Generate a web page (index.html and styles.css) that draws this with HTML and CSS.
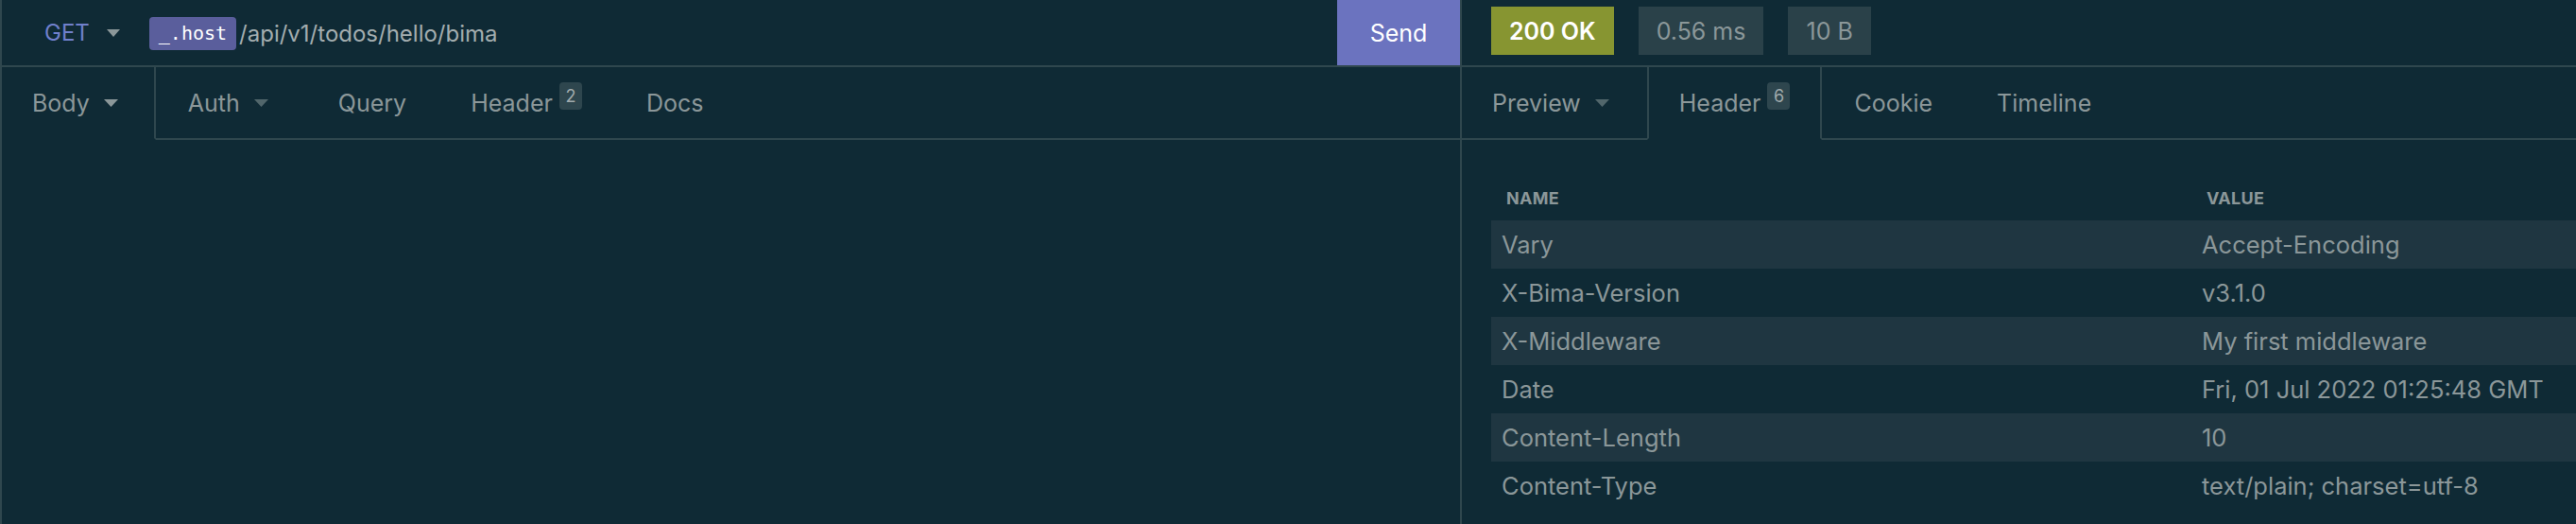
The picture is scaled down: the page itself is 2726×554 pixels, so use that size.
FILE: index.html
```html
<!DOCTYPE html>
<html lang="en">
<head>
<meta charset="utf-8">
<title>Request</title>
<link rel="stylesheet" href="styles.css">
</head>
<body>
<div class="app">
  <section class="pane pane-request">
    <header class="bar">
      <div class="method">GET
        <svg class="caret" width="14" height="8" viewBox="0 0 14 8"><polygon points="0,0 14,0 7,8"/></svg>
      </div>
      <div class="url"><span class="tag">_.host</span><span class="path">/api/v1/todos/hello/bima</span></div>
      <div class="send">Send</div>
    </header>
    <nav class="tabs">
      <div class="tab tab-active tab-first">Body
        <svg class="caret" width="15" height="8" viewBox="0 0 15 8"><polygon points="0,0 15,0 7.5,8"/></svg>
      </div>
      <div class="tab tab-drop">Auth
        <svg class="caret caret-dim" width="15" height="8" viewBox="0 0 15 8"><polygon points="0,0 15,0 7.5,8"/></svg>
      </div>
      <div class="tab">Query</div>
      <div class="tab">Header <span class="count">2</span></div>
      <div class="tab">Docs</div>
      <div class="tab-fill"></div>
    </nav>
  </section>
  <section class="pane pane-response">
    <header class="bar bar-status">
      <span class="pill pill-ok">200 OK</span>
      <span class="pill">0.56 ms</span>
      <span class="pill">10 B</span>
    </header>
    <nav class="tabs">
      <div class="tab tab-drop tab-preview">Preview
        <svg class="caret caret-dim" width="15" height="8" viewBox="0 0 15 8"><polygon points="0,0 15,0 7.5,8"/></svg>
      </div>
      <div class="tab tab-active">Header <span class="count">6</span></div>
      <div class="tab">Cookie</div>
      <div class="tab">Timeline</div>
      <div class="tab-fill"></div>
    </nav>
    <div class="headers">
      <div class="row row-head"><div class="cell">Name</div><div class="cell">Value</div></div>
      <div class="row"><div class="cell">Vary</div><div class="cell">Accept-Encoding</div></div>
      <div class="row"><div class="cell">X-Bima-Version</div><div class="cell">v3.1.0</div></div>
      <div class="row"><div class="cell">X-Middleware</div><div class="cell">My first middleware</div></div>
      <div class="row"><div class="cell">Date</div><div class="cell">Fri, 01 Jul 2022 01:25:48 GMT</div></div>
      <div class="row"><div class="cell">Content-Length</div><div class="cell">10</div></div>
      <div class="row"><div class="cell">Content-Type</div><div class="cell">text/plain; charset=utf-8</div></div>
    </div>
  </section>
</div>
</body>
</html>
```

FILE: styles.css
```css
* { box-sizing: border-box; }

html, body {
  margin: 0;
  height: 100%;
  background: #0f2a35;
}

body {
  font-family: Inter, "Noto Sans", sans-serif;
  color: #8b9799;
  overflow: hidden;
}

.app {
  display: flex;
  height: 554px;
  border-left: 2px solid #2f474e;
}

.pane {
  display: flex;
  flex-direction: column;
}

.pane-request {
  width: 1545px;
  border-right: 2px solid #2f474e;
  flex: none;
}

.pane-response {
  flex: 1;
  min-width: 0;
}

.bar {
  height: 71px;
  display: flex;
  align-items: center;
  border-bottom: 2px solid #2f474e;
  font-size: 24px;
}

.method {
  display: flex;
  align-items: center;
  gap: 18px;
  padding-left: 45px;
  color: #7080cc;
  margin-right: 31px;
}

.caret { fill: #8b9799; display: block; }
.caret-dim { fill: #51666b; }

.url {
  flex: 1;
  display: flex;
  align-items: center;
  gap: 3px;
  margin-top: 2px;
}

.tag {
  background: #5a5e9c;
  color: #ffffff;
  font-family: "DejaVu Sans Mono", monospace;
  font-size: 20px;
  height: 35px;
  line-height: 35px;
  padding: 0 10px;
  border-radius: 4px;
}

.path { color: #a3adaf; }

.send {
  align-self: stretch;
  width: 130px;
  background: #6b73bf;
  color: #ffffff;
  font-size: 25px;
  display: flex;
  align-items: center;
  justify-content: center;
}

.bar-status {
  align-items: flex-start;
  padding: 7px 0 0 31px;
  gap: 26px;
}

.pill {
  height: 51px;
  padding: 0 19px;
  display: flex;
  align-items: center;
  background: #2a4149;
  color: #8b9799;
  font-size: 25px;
}

.pill-ok {
  background: #879531;
  color: #ffffff;
  font-weight: 600;
}

.tabs {
  display: flex;
  height: 77px;
  font-size: 25px;
}

.tab {
  display: flex;
  align-items: center;
  gap: 15px;
  padding: 0 34px;
  border-bottom: 2px solid #2f474e;
}

.tab-drop { padding: 0 40px 0 34px; }

.tab-active {
  border-bottom-color: transparent;
  border-left: 2px solid #2f474e;
  border-right: 2px solid #2f474e;
  padding: 0 32px;
}

.tab-first {
  border-left: none;
  padding: 0 38px 0 32px;
}

.tab-preview { padding: 0 40px 0 32px; }

.tab-fill {
  flex: 1;
  border-bottom: 2px solid #2f474e;
}

.count {
  align-self: flex-start;
  margin: 16px 0 0 -8px;
  background: #2e464e;
  color: #a0aaac;
  font-size: 18px;
  height: 29px;
  min-width: 24px;
  padding: 0 5px;
  border-radius: 4px;
  display: flex;
  align-items: center;
  justify-content: center;
}

.headers {
  padding: 37px 0 0 31px;
}

.row {
  display: grid;
  grid-template-columns: 741px 1fr;
  height: 51px;
  align-items: center;
  font-size: 25.5px;
}

.row:nth-child(even) { background: #1f3641; }

.cell {
  padding-left: 11px;
  white-space: nowrap;
}

.row-head {
  height: 48px;
  font-size: 18px;
  font-weight: 700;
  text-transform: uppercase;
  letter-spacing: 0.3px;
}

.row-head .cell { padding-left: 16px; }
```
